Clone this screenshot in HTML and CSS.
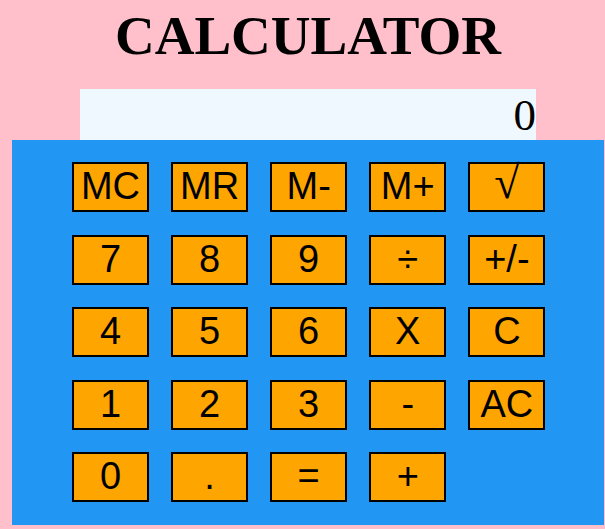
FILE: index.html
```
<!DOCTYPE html>
<html>
<head>
<meta charset="utf-8">
<link rel="stylesheet" href="styles.css">
</head>
<body>
<div class="wrap">
  <h1 class="title">CALCULATOR</h1>
  <div class="display">0</div>
  <div class="pad">
    <button class="key">MC</button>
    <button class="key">MR</button>
    <button class="key">M-</button>
    <button class="key">M+</button>
    <button class="key key-sqrt">√</button>
    <button class="key">7</button>
    <button class="key">8</button>
    <button class="key">9</button>
    <button class="key">÷</button>
    <button class="key">+/-</button>
    <button class="key">4</button>
    <button class="key">5</button>
    <button class="key">6</button>
    <button class="key">X</button>
    <button class="key">C</button>
    <button class="key">1</button>
    <button class="key">2</button>
    <button class="key">3</button>
    <button class="key">-</button>
    <button class="key">AC</button>
    <button class="key">0</button>
    <button class="key">.</button>
    <button class="key">=</button>
    <button class="key">+</button>
  </div>
</div>
</body>
</html>
```
FILE: styles.css
```
html, body {
  margin: 0;
  padding: 0;
  background: #ffc0cb;
}
.wrap {
  margin-left: 12px;
  width: 592px;
}
.title {
  margin: 0;
  padding-top: 4.5px;
  text-align: center;
  font-family: "Liberation Serif", serif;
  font-weight: 700;
  font-size: 55px;
  line-height: 61px;
  color: #000;
}
.display {
  margin: 23.5px 0 0 68px;
  width: 456px;
  height: 51px;
  box-sizing: border-box;
  padding-top: 1px;
  background: #f0f8ff;
  text-align: right;
  font-family: "Liberation Serif", serif;
  font-size: 45px;
  line-height: 50px;
  color: #000;
}
.pad {
  background: #2196f3;
  padding: 22px 0 23px 60px;
  display: grid;
  grid-template-columns: repeat(5, 77px);
  grid-auto-rows: 50px;
  column-gap: 22.1px;
  row-gap: 22.5px;
}
.key {
  box-sizing: border-box;
  width: 77px;
  height: 50px;
  margin: 0;
  padding: 0;
  border: 2px solid #000;
  border-radius: 0;
  background: #ffa500;
  color: #000;
  font-family: "Liberation Sans", Arial, sans-serif;
  font-size: 38px;
  line-height: 1.15;
  display: flex;
  align-items: center;
  justify-content: center;
}
.key-sqrt {
  font-family: "Liberation Serif", serif;
  font-size: 46px;
  line-height: 1;
  padding-bottom: 8px;
}
```
